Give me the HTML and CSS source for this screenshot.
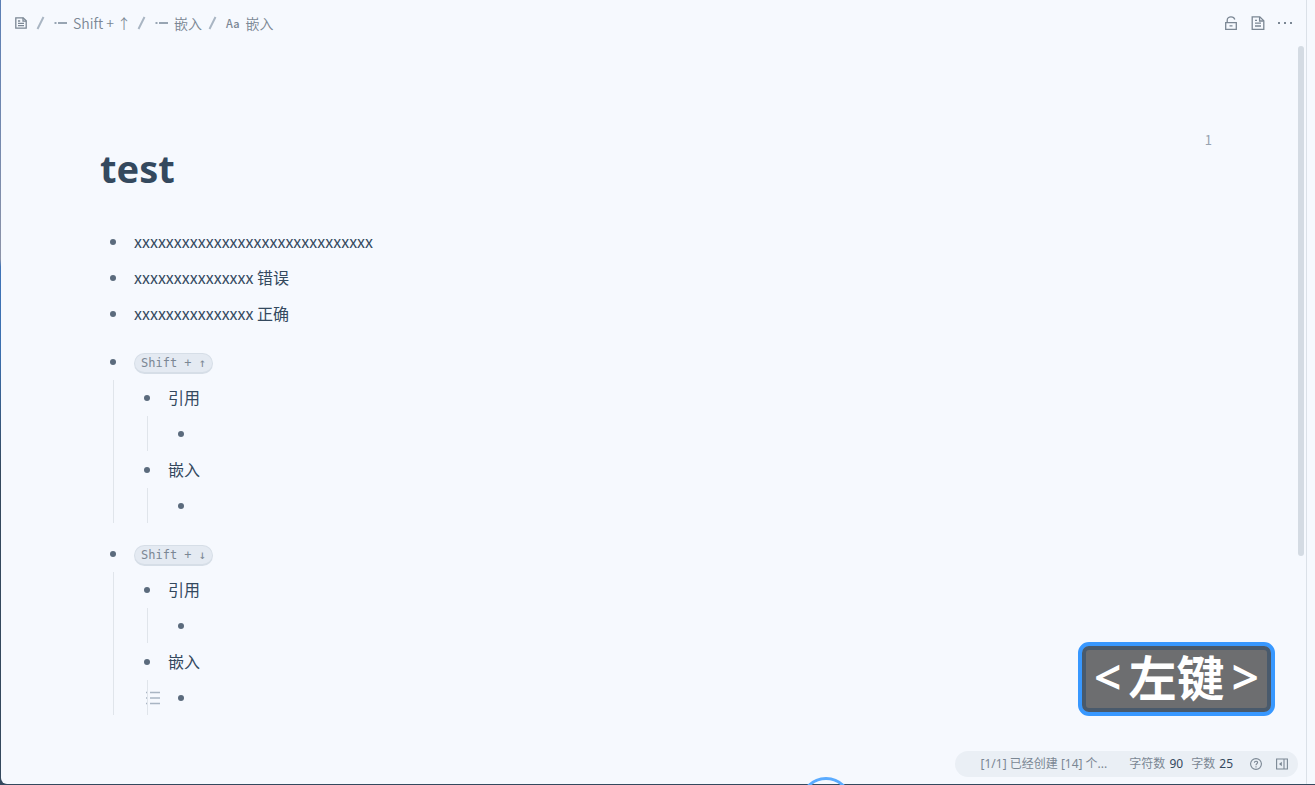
FILE: index.html
```html
<!DOCTYPE html>
<html lang="zh-CN">
<head>
<meta charset="utf-8">
<title>test</title>
<link rel="stylesheet" href="styles.css">
</head>
<body>
<div class="window">
  <div class="pane">
    <header class="topbar">
      <nav class="breadcrumb" aria-label="breadcrumb">
        <a class="crumb" href="#" aria-label="test"><svg class="icon-sm" viewBox="0 0 12 12"><path d="M.8.8h7.4l3 3v7.4H.8z"/><path d="M8 .8v3.4h3.2M3 4h2.2M3 6.3h6M3 8.7h6"/></svg></a>
        <svg class="slash" viewBox="0 0 9 14"><path d="M1.5 13 7.5 1"/></svg>
        <a class="crumb" href="#"><svg class="dash" viewBox="0 0 13 12"><path d="M.5 6h2M4 6h9"/></svg><span>Shift + ↑</span></a>
        <svg class="slash" viewBox="0 0 9 14"><path d="M1.5 13 7.5 1"/></svg>
        <a class="crumb" href="#"><svg class="dash" viewBox="0 0 13 12"><path d="M.5 6h2M4 6h9"/></svg><span>嵌入</span></a>
        <svg class="slash" viewBox="0 0 9 14"><path d="M1.5 13 7.5 1"/></svg>
        <a class="crumb" href="#"><span class="aa">Aa</span><span>嵌入</span></a>
      </nav>
      <div class="actions">
        <button class="icon-button" aria-label="lock"><svg viewBox="0 0 14 14"><path d="M1.7 6.7h10.6v6.6H1.7z"/><path d="M3.2 6.5V4.2C3.2 2.2 5 .9 7 .9s3.4 1.2 3.8 2.6M5.5 9.9h3"/></svg></button>
        <button class="icon-button" aria-label="document"><svg viewBox="0 0 14 14"><path d="M1.2.8h7.6l4 4v8.5H1.2z"/><path d="M8.6 1v4h4M4 4.4h2M4 7.2h6M4 10h6"/></svg></button>
        <button class="icon-button" aria-label="more"><svg viewBox="0 0 14 14"><path class="solid" d="M0 6h2v2H0zM6 6h2v2H6zM12 6h2v2h-2z"/></svg></button>
      </div>
    </header>
    <main class="document">
      <div class="refs"><a class="ref-count" href="#">1</a></div>
      <h1 class="title">test</h1>
      <ul class="list">
        <li><div class="row">xxxxxxxxxxxxxxxxxxxxxxxxxxxxxx</div></li>
        <li><div class="row">xxxxxxxxxxxxxxx 错误</div></li>
        <li><div class="row">xxxxxxxxxxxxxxx 正确</div></li>
      </ul>
      <ul class="list">
        <li><div class="row"><kbd>Shift + ↑</kbd></div>
          <ul>
            <li><div class="row">引用</div><ul><li><div class="row"></div></li></ul></li>
            <li><div class="row">嵌入</div><ul><li><div class="row"></div></li></ul></li>
          </ul>
        </li>
      </ul>
      <ul class="list">
        <li><div class="row"><kbd>Shift + ↓</kbd></div>
          <ul>
            <li><div class="row">引用</div><ul><li><div class="row"></div></li></ul></li>
            <li><div class="row">嵌入</div><ul><li><div class="row"></div><button class="gutter" aria-label="list"><svg viewBox="0 0 14 14"><path d="M0 1.5h2M4 1.5h10M0 7h2M4 7h10M0 12.5h2M4 12.5h10"/></svg></button></li></ul></li>
          </ul>
        </li>
      </ul>
    </main>
    <div class="scrollbar"></div>
    <footer class="status">
      <span class="message">[1/1] 已经创建 [14] 个...</span>
      <span class="count">字符数 <b>90</b></span>
      <span class="count">字数 <b>25</b></span>
      <button class="status-button" aria-label="help"><svg viewBox="0 0 12 12"><circle cx="6" cy="6" r="5.4"/><path d="M4.4 4.8c0-2.1 3.2-2.1 3.2-.2C7.6 5.8 6 5.8 6 7.2M6 8.2v1.2"/></svg></button>
      <button class="status-button" aria-label="dock"><svg viewBox="0 0 12 12"><path d="M.6 1h10.8v10H.6zM8 1v10"/><path class="solid" d="M5.8 3.7v4.6L3 6z"/></svg></button>
    </footer>
  </div>
  <div class="keycast"><span class="angle">&lt;</span><span class="key">左键</span><span class="angle">&gt;</span></div>
  <div class="ripple"></div>
</div>
</body>
</html>
```
FILE: styles.css
```css
* { box-sizing: border-box; }
body {
  margin: 0;
  color: #34495e;
  font: 16px/24px "Liberation Sans", "Noto Sans CJK SC", sans-serif;
  font-family: "Noto Sans CJK SC", "Noto Sans", sans-serif;
}
button { padding: 0; border: 0; background: none; color: inherit; }
a { color: inherit; text-decoration: none; }
svg { display: block; fill: none; stroke: currentColor; stroke-width: 1.3; }
.solid { fill: currentColor; stroke: none; }
.window {
  position: relative;
  min-height: 100vh;
  display: flex;
  padding: 0 0 1px 1px;
  overflow: hidden;
  background: linear-gradient(#5b7fb5, #8c93a8 33%, #3f74b8 34%, #3b6fae 45%, #34495e 60%, #34495e);
}
.pane {
  position: relative;
  flex: 1;
  display: flex;
  flex-direction: column;
  background: #f6f9fe;
  border-bottom-left-radius: 6px;
}
.pane::after {
  content: "";
  position: absolute;
  top: 0;
  bottom: 0;
  right: 8px;
  width: 1px;
  background: #dbe1e8;
}
.topbar {
  height: 46px;
  display: flex;
  align-items: center;
  justify-content: space-between;
  padding: 0 23px 0 14px;
  color: #7b8794;
}
.breadcrumb { display: flex; align-items: center; font-size: 14px; font-weight: 350; line-height: 22px; }
.crumb { display: flex; align-items: center; gap: 6px; }
.icon-sm { width: 12px; height: 12px; }
.slash { width: 9px; height: 14px; margin: 0 9px 0 6px; color: #a9b5c3; stroke-width: 2; }
.crumb:first-child + .slash { margin-left: 9px; }
.dash { width: 13px; height: 12px; stroke-width: 2; color: #98a5b3; }
.aa { font-size: 11px; font-weight: 500; }
.actions { display: flex; gap: 13px; }
.icon-button svg { width: 14px; height: 14px; }
.document { flex: 1; padding: 86px 94px 68px 99px; }
.refs { height: 16px; display: flex; justify-content: flex-end; padding-right: 9px; }
.ref-count { font-size: 13px; line-height: 16px; color: #97a3b0; }
.title {
  margin: 0 0 36px;
  font: 700 38px/40px "Noto Sans", sans-serif;
}
.list + .list { margin-top: 12px; }
ul { list-style: none; margin: 0; padding: 0; }
li { position: relative; padding-left: 34px; }
li::before {
  content: "";
  position: absolute;
  left: 10px;
  top: 15px;
  width: 6px;
  height: 6px;
  border-radius: 50%;
  background: #5b6b7d;
}
li:has(> ul)::after {
  content: "";
  position: absolute;
  left: 13px;
  top: 36px;
  bottom: 1px;
  width: 1px;
  background: #e0e5eb;
}
.row { height: 36px; line-height: 34px; }
kbd {
  display: inline-block;
  padding: 0 6px;
  border: 1px solid #d6dee7;
  border-bottom-width: 2px;
  border-radius: 11px;
  background: #e4eaf2;
  color: #7b8794;
  font: 12px/18px "DejaVu Sans Mono", monospace;
  vertical-align: 1px;
}
.gutter { position: absolute; left: -22px; top: 11px; color: #a9b5c3; }
.gutter svg { width: 14px; height: 14px; stroke-width: 1.5; }
.scrollbar {
  position: absolute;
  top: 46px;
  right: 11px;
  width: 6px;
  height: 65%;
  border-radius: 3px;
  background: #d4dbe3;
}
.status {
  position: absolute;
  right: 17px;
  bottom: 7px;
  height: 26px;
  display: flex;
  align-items: center;
  gap: 8px;
  padding: 0 10px 0 26px;
  border-radius: 13px;
  background: #eaeff5;
  color: #7b8794;
  font-family: "Noto Sans", "Noto Sans CJK SC", sans-serif;
  font-size: 12px;
}
.message { margin-right: 14px; }
.count b { margin-left: 1px; color: #34495e; font-weight: 400; }
.status-button { margin-left: 9px; }
.status-button + .status-button { margin-left: 6px; }
.status-button svg { width: 12px; height: 12px; stroke-width: 1.1; }
.keycast {
  position: absolute;
  right: 40px;
  bottom: 69px;
  height: 74px;
  display: flex;
  align-items: center;
  gap: 7px;
  padding: 0 12px;
  border: 4px solid #3898ff;
  border-radius: 11px;
  background: #6d6e70;
  box-shadow: inset 0 0 0 4px #495a6c;
  color: #fff;
  font-size: 48px;
  font-weight: 700;
}
.key { padding-bottom: 8px; }
.angle { padding-bottom: 4px; font-family: "Noto Sans", sans-serif; font-weight: 600; }
.ripple {
  position: absolute;
  left: calc(63% - 28px);
  bottom: -44px;
  width: 52px;
  height: 52px;
  border: 3px solid #5aabff;
  border-radius: 50%;
}
```
